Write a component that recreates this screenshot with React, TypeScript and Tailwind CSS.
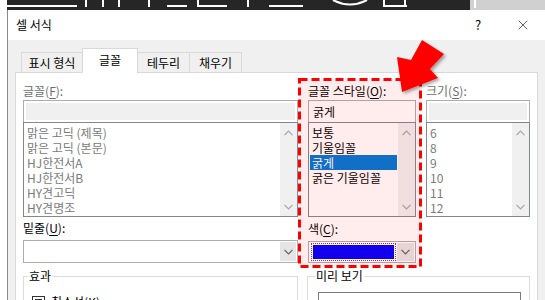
import { X } from 'lucide-react';

const fontList = ['맑은 고딕 (제목)', '맑은 고딕 (본문)', 'HJ한전서A', 'HJ한전서B', 'HY견고딕', 'HY견명조'];
const styleList = ['보통', '기울임꼴', '굵게', '굵은 기울임꼴'];
const sizeList = ['6', '8', '9', '10', '11', '12'];

function Chevron({ dir, color = '#a6a6a6' }: { dir: 'up' | 'down'; color?: string }) {
    return (
        <svg width="9" height="6" viewBox="0 0 9 6">
            <path
                d={dir === 'up' ? 'M0.5 5.2L4.5 1.2L8.5 5.2' : 'M0.5 0.8L4.5 4.8L8.5 0.8'}
                fill="none"
                stroke={color}
                strokeWidth="1.2"
            />
        </svg>
    );
}

function ScrollBar() {
    return (
        <div className="flex w-[17px] flex-col items-center justify-between bg-[#f0f0f0] pt-[7px] pb-[6px]">
            <Chevron dir="up" />
            <Chevron dir="down" />
        </div>
    );
}

function ListBox({ items, selected = -1, muted }: { items: string[]; selected?: number; muted?: boolean }) {
    return (
        <div className="-mt-px flex h-[95px] border border-[#828790] bg-white">
            <div className="flex-1 px-px pt-[2px]">
                {items.map((it, i) => (
                    <div
                        key={it}
                        className={
                            i === selected
                                ? 'h-[15px] bg-[#0078d7] pl-[2px] leading-[15px] text-white'
                                : muted
                                  ? 'h-[15px] pl-[2px] leading-[15px] text-[#7a7a7a]'
                                  : 'h-[15px] pl-[2px] leading-[15px] text-black'
                        }
                    >
                        {it}
                    </div>
                ))}
            </div>
            <ScrollBar />
        </div>
    );
}

function Label({ text, key1, rest, muted }: { text: string; key1: string; rest: string; muted?: boolean }) {
    return (
        <div className={muted ? 'h-[16px] leading-[16px] text-[#6d6d6d]' : 'h-[16px] leading-[16px] text-black'}>
            {text}(<span className="underline underline-offset-2">{key1}</span>){rest}
        </div>
    );
}

function DropButton({ w }: { w: string }) {
    return (
        <div className={`flex ${w} items-center justify-center bg-[#e5e5e5]`}>
            <Chevron dir="down" color="#606060" />
        </div>
    );
}

export default function App() {
    return (
        <div className="relative h-[300px] w-[545px] overflow-hidden bg-white font-['Noto_Sans_CJK_KR',sans-serif] text-[12px]">
            {/* cropped sheet behind the dialog */}
            <div className="flex h-[10px]">
                <div className="w-[7px] bg-white" />
                <div className="flex-1 bg-[#262626]">
                    <svg width="463" height="10" viewBox="0 0 463 10">
                        <rect x="0" y="5" width="70" height="2" fill="#fff" />
                        <rect x="78" y="0" width="2" height="7" fill="#fff" />
                        <rect x="95" y="0" width="2" height="7" fill="#fff" />
                        <rect x="111" y="0" width="2" height="7" fill="#fff" />
                        <rect x="141" y="0" width="2" height="7" fill="#fff" />
                        <rect x="160" y="5" width="20" height="2" fill="#fff" />
                        <rect x="190" y="0" width="2" height="7" fill="#fff" />
                        <rect x="190" y="5" width="30" height="2" fill="#fff" />
                        <rect x="240" y="0" width="2" height="7" fill="#fff" />
                        <rect x="262" y="5" width="34" height="2" fill="#fff" />
                        <path d="M326 0 Q343 9 360 0" fill="none" stroke="#fff" strokeWidth="2" />
                        <rect x="376" y="0" width="2" height="7" fill="#fff" />
                        <rect x="376" y="5" width="24" height="2" fill="#fff" />
                        <rect x="397" y="0" width="2" height="7" fill="#fff" />
                    </svg>
                </div>
                <div className="w-[75px] bg-[#d0d0d0] pl-[4px]">
                    <div className="h-[8px] w-[2px] bg-white" />
                </div>
            </div>

            {/* dialog */}
            <div className="ml-[7px] flex w-[539px] flex-col border-l border-[#8a8a8a]">
                <div className="flex h-[30px] items-center bg-white pl-[8px]">
                    <span className="text-black">셀 서식</span>
                    <div className="ml-auto flex h-full">
                        <div className="flex w-[44px] items-center justify-center text-[13px] text-black">?</div>
                        <div className="flex w-[46px] items-center justify-center">
                            <X size={16} strokeWidth={1} color="#111" />
                        </div>
                    </div>
                </div>

                <div className="h-[260px] bg-[#f0f0f0] pt-[8px]">
                    {/* tabs */}
                    <div className="ml-[13px] flex h-[24px] items-end">
                        <div className="flex h-[20px] w-[61px] items-center justify-center border-t border-l border-[#d9d9d9] bg-[#f0f0f0] text-black">
                            표시 형식
                        </div>
                        <div className="relative z-10 -mb-px flex h-[25px] w-[56px] items-center justify-center border-x border-t border-[#d9d9d9] bg-white pb-[2px] text-black">
                            글꼴
                        </div>
                        <div className="flex h-[20px] w-[51px] items-center justify-center border-t border-[#d9d9d9] bg-[#f0f0f0] text-black">
                            테두리
                        </div>
                        <div className="flex h-[20px] w-[53px] items-center justify-center border-x border-t border-[#d9d9d9] bg-[#f0f0f0] text-black">
                            채우기
                        </div>
                    </div>

                    {/* tab panel */}
                    <div className="ml-[7px] h-[240px] w-[523px] border border-[#d9d9d9] bg-white pt-[10px] pl-[7px]">
                        <div className="grid grid-cols-[275px_108px_104px] gap-x-[10px]">
                            <div>
                                <Label text="글꼴" key1="F" rest=":" muted />
                                <div className="mt-px h-[23px] border border-[#adadad] bg-white p-[2px]">
                                    <div className="h-full bg-[#f0f0f0]" />
                                </div>
                                <ListBox items={fontList} muted />
                            </div>
                            <div>
                                <Label text="글꼴 스타일" key1="O" rest=":" />
                                <div className="mt-px h-[23px] border border-[#adadad] bg-white pl-[4px] leading-[21px] text-black">
                                    굵게
                                </div>
                                <ListBox items={styleList} selected={2} />
                            </div>
                            <div>
                                <Label text="크기" key1="S" rest=":" muted />
                                <div className="mt-px h-[23px] border border-[#adadad] bg-white p-[2px]">
                                    <div className="h-full bg-[#f0f0f0]" />
                                </div>
                                <ListBox items={sizeList} muted />
                            </div>

                            <div className="pt-[3px]">
                                <Label text="밑줄" key1="U" rest=":" />
                                <div className="mt-[4px] flex h-[23px] border border-[#adadad] bg-white p-px">
                                    <div className="flex-1" />
                                    <DropButton w="w-[16px]" />
                                </div>
                            </div>
                            <div className="pt-[4px]">
                                <Label text="색" key1="C" rest=":" />
                                <div className="mt-[4px] flex h-[22px] border border-[#adadad] bg-white p-px">
                                    <div className="flex flex-1 items-center px-px">
                                        <div className="h-[18px] w-full border border-dotted border-[#555] p-px">
                                            <div className="h-full bg-[#0000ff]" />
                                        </div>
                                    </div>
                                    <DropButton w="w-[17px]" />
                                </div>
                            </div>
                            <div />

                            <fieldset className="mt-[5px] h-[60px] border border-[#dcdcdc]">
                                <legend className="ml-[4px] px-px leading-[16px] text-black">효과</legend>
                                <div className="flex items-center gap-[6px] pt-[9px] pl-[8px]">
                                    <div className="flex h-[13px] w-[13px] items-center justify-center border border-[#333]">
                                        <div className="h-[7px] w-[7px] bg-[#333]" />
                                    </div>
                                    <span className="text-black">취소선(K)</span>
                                </div>
                            </fieldset>
                            <fieldset className="col-span-2 mt-[5px] -ml-px h-[60px] border border-[#dcdcdc]">
                                <legend className="ml-[7px] px-px leading-[16px] text-black">미리 보기</legend>
                                <div className="mx-[8px] mt-[8px] ml-[10px] h-[40px] border border-[#7a7a7a] bg-white" />
                            </fieldset>
                        </div>
                    </div>
                </div>
            </div>

            {/* annotation: dashed box and arrow */}
            <svg className="pointer-events-none absolute top-0 left-0" width="545" height="300" viewBox="0 0 545 300">
                <defs>
                    <filter id="sh" x="-30%" y="-30%" width="160%" height="160%">
                        <feDropShadow dx="2" dy="2" stdDeviation="1.8" floodColor="#000" floodOpacity="0.35" />
                    </filter>
                </defs>
                <rect
                    x="299.5"
                    y="79.5"
                    width="121"
                    height="187"
                    fill="rgba(255,0,0,0.07)"
                    stroke="#ff0000"
                    strokeWidth="3"
                    strokeDasharray="8 4"
                />
                <polygon
                    points="422,40 444,54 430,69 438,78 402,92 397,57 411,60"
                    fill="#ff0000"
                    filter="url(#sh)"
                />
            </svg>
        </div>
    );
}
